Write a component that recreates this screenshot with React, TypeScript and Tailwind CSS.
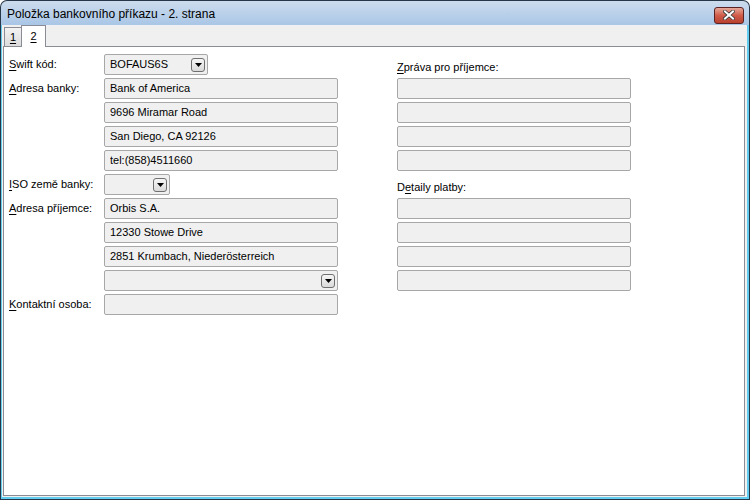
import React from 'react';

const font = { fontFamily: '"Liberation Sans", Arial, sans-serif' };

function Ul({ children }: { children: React.ReactNode }) {
  return <span className="underline underline-offset-[2px] decoration-1">{children}</span>;
}

function DropButton() {
  return (
    <div className="w-[14px] h-[14px] rounded-[3px] border border-[#6f6f6f] bg-gradient-to-b from-[#f6f6f6] to-[#dadada] flex items-center justify-center">
      <svg width="7" height="4" viewBox="0 0 7 4">
        <path d="M0 0h7L3.5 4z" fill="#000" />
      </svg>
    </div>
  );
}

function Field({ value, width = 'w-[234px]', combo }: { value?: string; width?: string; combo?: boolean }) {
  return (
    <div
      className={`${width} h-[21px] rounded-[2px] border border-[#a7a7a7] bg-[#f0f0f0] flex items-center pl-[5px] pr-[2px] text-[11px] text-black`}
    >
      <span className="flex-1 truncate">{value}</span>
      {combo && <DropButton />}
    </div>
  );
}

function Label({ children }: { children: React.ReactNode }) {
  return <div className="h-[21px] flex items-center text-[11px] text-black">{children}</div>;
}

export default function App() {
  return (
    <div style={font} className="w-[750px] h-[500px] bg-[#26374a] p-px rounded-t-[7px] overflow-hidden">
      <div className="h-full flex flex-col rounded-t-[6px] overflow-hidden">
        {/* title bar */}
        <div className="h-[24px] shrink-0 bg-gradient-to-b from-[#cddcee] to-[#a9c6e6] flex items-center pl-[6px] pr-[5px]">
          <span className="flex-1 text-[12px] text-black pt-[1px]">Položka bankovního příkazu - 2. strana</span>
          <div className="w-[30px] h-[17px] mt-[4px] rounded-[3px] border border-[#5a2222] bg-gradient-to-b from-[#e5a89a] via-[#cf5b48] to-[#b8402f] flex items-center justify-center">
            <svg width="12" height="10" viewBox="0 0 12 10">
              <path d="M2 1.5l8 7M10 1.5l-8 7" stroke="#3a3a3a" strokeWidth="3.6" strokeLinecap="square" />
              <path d="M2 1.5l8 7M10 1.5l-8 7" stroke="#ffffff" strokeWidth="2" strokeLinecap="square" />
            </svg>
          </div>
        </div>

        {/* body */}
        <div className="flex-1 flex flex-col bg-[#f0f0f0] border-l border-r-2 border-b-2 border-[#62cdee]">
          {/* tab strip */}
          <div className="h-[21px] shrink-0 flex items-end pl-[2px]">
            <div className="h-[19px] w-[18px] border border-b-0 border-[#898c95] bg-gradient-to-b from-[#f3f3f3] to-[#dcdcdc] flex items-center justify-center text-[11px] text-black">
              <Ul>1</Ul>
            </div>
            <div className="h-[22px] w-[25px] -mb-px -ml-px border border-b-0 border-[#898c95] bg-white flex items-center justify-center text-[11px] text-black relative z-10">
              <Ul>2</Ul>
            </div>
          </div>

          {/* panel */}
          <div className="flex-1 ml-px mr-[2px] mb-px border border-[#898c95] bg-white pl-[5px] pt-[7px] flex gap-[59px]">
            <div className="grid grid-cols-[95px_234px] auto-rows-[21px] gap-y-[3px] content-start">
              <Label><span><Ul>S</Ul>wift kód:</span></Label>
              <Field value="BOFAUS6S" width="w-[104px]" combo />

              <Label><span><Ul>A</Ul>dresa banky:</span></Label>
              <Field value="Bank of America" />
              <div />
              <Field value="9696 Miramar Road" />
              <div />
              <Field value="San Diego, CA 92126" />
              <div />
              <Field value="tel:(858)4511660" />

              <Label><span><Ul>I</Ul>SO země banky:</span></Label>
              <Field width="w-[66px]" combo />

              <Label><span><Ul>A</Ul>dresa příjemce:</span></Label>
              <Field value="Orbis S.A." />
              <div />
              <Field value="12330 Stowe Drive" />
              <div />
              <Field value="2851 Krumbach, Niederösterreich" />
              <div />
              <Field combo />

              <Label><span><Ul>K</Ul>ontaktní osoba:</span></Label>
              <Field />
            </div>

            <div className="grid grid-cols-[234px] auto-rows-[21px] gap-y-[3px] content-start">
              <div className="flex items-end text-[11px] text-black">
                <span><Ul>Z</Ul>práva pro příjemce:</span>
              </div>
              <Field />
              <Field />
              <Field />
              <Field />
              <div className="flex items-end text-[11px] text-black">
                <span>D<Ul>e</Ul>taily platby:</span>
              </div>
              <Field />
              <Field />
              <Field />
              <Field />
            </div>
          </div>
        </div>
      </div>
    </div>
  );
}
